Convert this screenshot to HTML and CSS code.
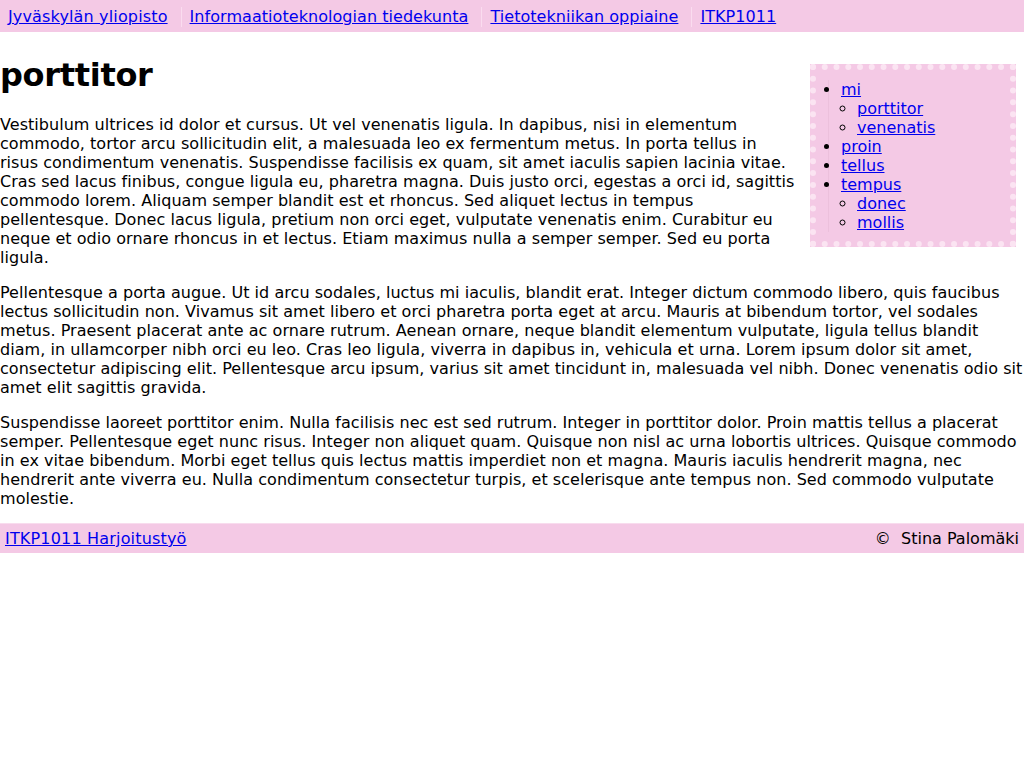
FILE: index.html
```html
<!DOCTYPE html>
<html lang="fi">
<head>
<meta charset="utf-8">
<title>porttitor</title>
<link rel="stylesheet" href="styles.css">
</head>
<body>
<header class="top">
  <ul class="crumbs">
    <li class="crumb crumb-wide"><a href="#">Jyväskylän yliopisto</a></li>
    <li class="crumb"><a href="#">Informaatioteknologian tiedekunta</a></li>
    <li class="crumb"><a href="#">Tietotekniikan oppiaine</a></li>
    <li class="crumb"><a href="#">ITKP1011</a></li>
  </ul>
</header>
<main class="content">
  <nav class="side">
    <ul class="menu">
      <li><a href="#">mi</a>
        <ul class="sub">
          <li><a href="#">porttitor</a></li>
          <li><a href="#">venenatis</a></li>
        </ul>
      </li>
      <li><a href="#">proin</a></li>
      <li><a href="#">tellus</a></li>
      <li><a href="#">tempus</a>
        <ul class="sub">
          <li><a href="#">donec</a></li>
          <li><a href="#">mollis</a></li>
        </ul>
      </li>
    </ul>
  </nav>
  <h1 class="title">porttitor</h1>
  <p>Vestibulum ultrices id dolor et cursus. Ut vel venenatis ligula. In dapibus, nisi in elementum commodo, tortor arcu sollicitudin elit, a malesuada leo ex fermentum metus. In porta tellus in risus condimentum venenatis. Suspendisse facilisis ex quam, sit amet iaculis sapien lacinia vitae. Cras sed lacus finibus, congue ligula eu, pharetra magna. Duis justo orci, egestas a orci id, sagittis commodo lorem. Aliquam semper blandit est et rhoncus. Sed aliquet lectus in tempus pellentesque. Donec lacus ligula, pretium non orci eget, vulputate venenatis enim. Curabitur eu neque et odio ornare rhoncus in et lectus. Etiam maximus nulla a semper semper. Sed eu porta ligula.</p>
  <p>Pellentesque a porta augue. Ut id arcu sodales, luctus mi iaculis, blandit erat. Integer dictum commodo libero, quis faucibus lectus sollicitudin non. Vivamus sit amet libero et orci pharetra porta eget at arcu. Mauris at bibendum tortor, vel sodales metus. Praesent placerat ante ac ornare rutrum. Aenean ornare, neque blandit elementum vulputate, ligula tellus blandit diam, in ullamcorper nibh orci eu leo. Cras leo ligula, viverra in dapibus in, vehicula et urna. Lorem ipsum dolor sit amet, consectetur adipiscing elit. Pellentesque arcu ipsum, varius sit amet tincidunt in, malesuada vel nibh. Donec venenatis odio sit amet elit sagittis gravida.</p>
  <p>Suspendisse laoreet porttitor enim. Nulla facilisis nec est sed rutrum. Integer in porttitor dolor. Proin mattis tellus a placerat semper. Pellentesque eget nunc risus. Integer non aliquet quam. Quisque non nisl ac urna lobortis ultrices. Quisque commodo in ex vitae bibendum. Morbi eget tellus quis lectus mattis imperdiet non et magna. Mauris iaculis hendrerit magna, nec hendrerit ante viverra eu. Nulla condimentum consectetur turpis, et scelerisque ante tempus non. Sed commodo vulputate molestie.</p>
</main>
<footer class="foot">
  <a href="#">ITKP1011 Harjoitustyö</a>
  <span class="author">©&nbsp; Stina Palomäki</span>
</footer>
</body>
</html>
```

FILE: styles.css
```css
html, body {
  margin: 0;
  padding: 0;
  background: #ffffff;
}

body {
  font-family: "DejaVu Sans", sans-serif;
  font-size: 16px;
  color: #000000;
}

a {
  color: #0000ee;
}

.top {
  background: #f4c9e5;
  padding: 7px 0 5px;
}

.crumbs {
  list-style: none;
  margin: 0;
  padding: 0;
  display: flex;
  gap: 5px;
}

.crumb {
  line-height: 20px;
  padding: 0 8px;
  border-left: 1px solid #fadcef;
  letter-spacing: 0.05px;
}

.crumb-wide {
  border-left: none;
  letter-spacing: 0.15px;
}

.content {
  display: flow-root;
}

.content p {
  letter-spacing: 0.04px;
}

.content p:last-child {
  margin-bottom: 15px;
}

.side {
  float: right;
  width: 194px;
  margin: 32px 8px 10px 12px;
  background: #f4c9e5;
  border: 6px dotted #fbe4f2;
}

.menu {
  margin: 10px 0 9px 12px;
  padding: 0 0 0 12px;
  border-left: 1px solid #ecc0dc;
}

.sub {
  margin: 0;
  padding-left: 16px;
  list-style-type: circle;
}

.title {
  font-size: 32px;
  margin: 24px 0 21px;
  letter-spacing: -0.3px;
}

.foot {
  display: flex;
  justify-content: space-between;
  background: #f4c9e5;
  padding: 5px;
  border-top: 1px solid #f8dcee;
}

.foot a {
  letter-spacing: 0.18px;
}

.author {
  color: #000000;
}
```
